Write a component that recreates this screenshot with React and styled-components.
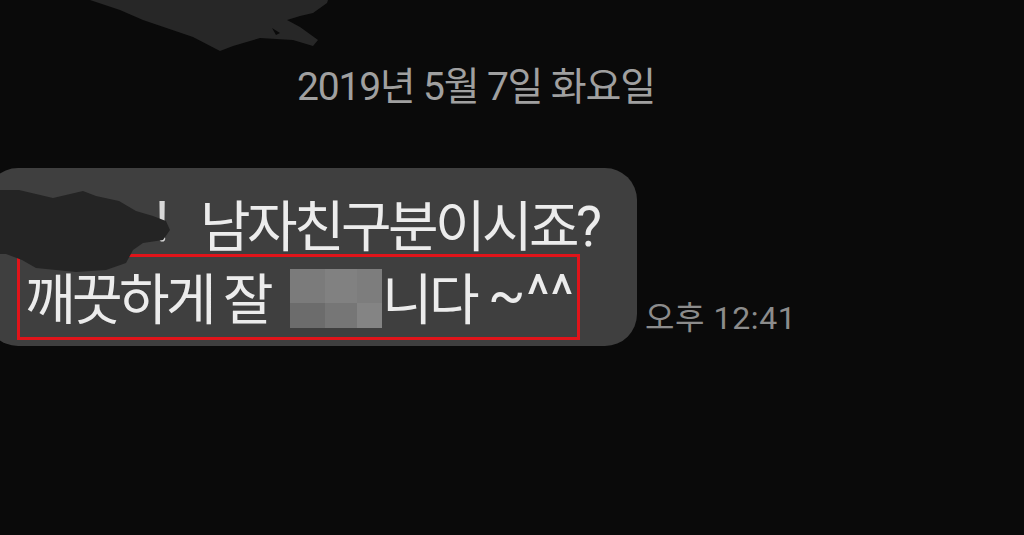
import React from "react"
import styled, { createGlobalStyle } from "styled-components"

const Global = createGlobalStyle`
  html, body {
    margin: 0;
    padding: 0;
    background: #0a0a0a;
  }
`

const Page = styled.div`
  position: relative;
  width: 1024px;
  height: 535px;
  overflow: hidden;
  background: #0a0a0a;
  font-family: Roboto, "Noto Sans CJK KR", sans-serif;
  display: flex;
  flex-direction: column;
`

const TopScribble = styled.svg`
  position: absolute;
  left: 0;
  top: 0;
`

const DateLabel = styled.div`
  margin: 64px 0 0 297px;
  height: 46px;
  line-height: 46px;
  font-size: 39px;
  letter-spacing: -1.2px;
  color: #a0a0a0;
`

const Row = styled.div`
  margin-top: 58px;
  display: flex;
  align-items: flex-end;
  gap: 8px;
`

const Bubble = styled.div`
  position: relative;
  margin-left: -14px;
  width: 651px;
  box-sizing: border-box;
  padding: 22px 40px 6px 31px;
  background: #3f3f3f;
  border-radius: 32px;
  display: flex;
  flex-direction: column;
  align-items: flex-start;
  color: #ececec;
  font-size: 55px;
  letter-spacing: -3.6px;
`

const Line = styled.div`
  display: flex;
  align-items: center;
  height: 64px;
  padding-left: ${p => p.indent || 0}px;
  white-space: nowrap;
`

const Faint = styled.span`
  flex-shrink: 0;
  width: 45px;
  color: #d8d8d8;
`

const RedBox = styled.div`
  display: flex;
  align-items: center;
  width: 563px;
  box-sizing: border-box;
  height: 86px;
  padding: 0 0 4px 5px;
  border: 3px solid #e0141a;
  white-space: nowrap;
`

const Mosaic = styled.span`
  display: inline-grid;
  grid-template-columns: 35px 32px 25px;
  grid-template-rows: 34px 25px;
  margin: 6px 0 0 20px;
`

const Cell = styled.span`
  background: ${p => p.tone};
`

const Smile = styled.span`
  margin-left: 12px;
  letter-spacing: 1px;
`

const Blot = styled.svg`
  position: absolute;
  left: 0;
  top: 0;
`

const Time = styled.div`
  margin-bottom: 8px;
  font-size: 32px;
  letter-spacing: 0.6px;
  color: #8c8c8c;
`

const tones = ["#7b7b7b", "#818181", "#7d7d7d", "#6c6c6c", "#767676", "#848484"]

export default function App() {
  return (
    <Page>
      <Global />
      <TopScribble width="340" height="60" viewBox="0 0 340 60">
        <path
          d="M90 0 L120 10 L143 20 L193 37 L220 51 L233 46 L260 38 L293 40 L313 46 L318 40 L300 27 L287 20 L300 16 L313 13 L327 3 L328 0 Z M272 28 L280 33 L276 35 Z"
          fill="#272727"
        />
      </TopScribble>
      <DateLabel>2019년 5월 7일 화요일</DateLabel>
      <Row>
        <Bubble>
          <Line indent={138}>
            <Faint>!</Faint>
            남자친구분이시죠?
          </Line>
          <RedBox>
            깨끗하게 잘
            <Mosaic>
              {tones.map((t, i) => (
                <Cell key={i} tone={t} />
              ))}
            </Mosaic>
            니다
            <Smile>~^^</Smile>
          </RedBox>
          <Blot width="200" height="110" viewBox="0 0 200 110">
            <path
              d="M0 22 L33 22 L67 30 L97 23 L110 28 L133 33 L150 43 L167 48 L180 53 L184 62 L177 72 L157 75 L147 82 L140 95 L120 102 L90 104 L50 100 L36 92 L20 86 L0 86 Z"
              fill="#242424"
            />
          </Blot>
        </Bubble>
        <Time>오후 12:41</Time>
      </Row>
    </Page>
  )
}
